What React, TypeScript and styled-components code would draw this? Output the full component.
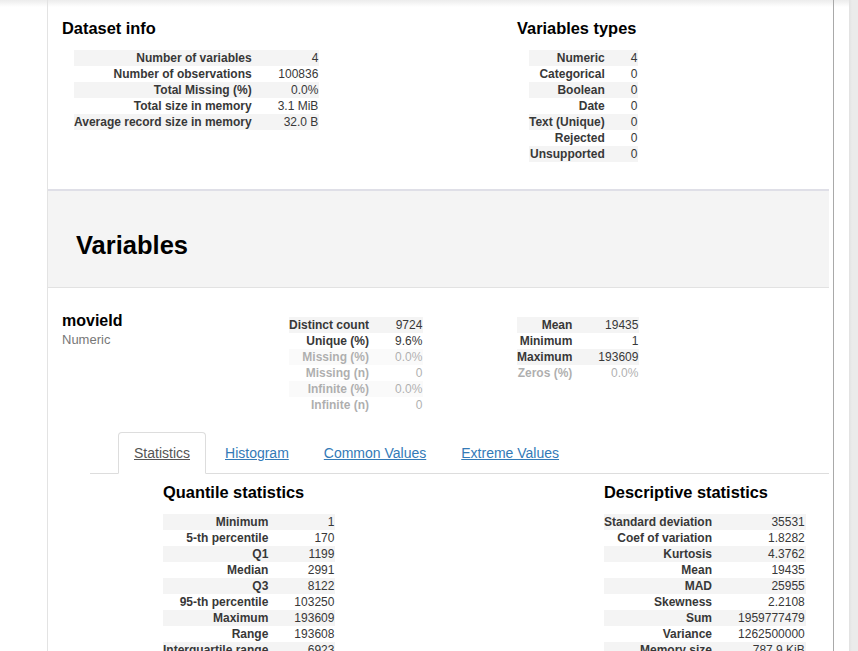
import styled, { createGlobalStyle } from 'styled-components';

const GlobalStyle = createGlobalStyle`
  html, body {
    margin: 0;
    padding: 0;
    overflow: hidden;
    background: #fff;
  }
  body {
    font-family: "Liberation Sans", Arial, Helvetica, sans-serif;
    color: #333;
  }
`;

const Viewport = styled.div`
  display: flex;
  height: 651px;
  overflow: hidden;
  background: linear-gradient(#ececec, #fff 7px);
`;

const PageArea = styled.div`
  flex: 1;
  padding: 0 15px 0 47px;
`;

const ScrollStrip = styled.div`
  width: 9px;
  background: linear-gradient(to right, #e1e1e1, #ebebeb 3px);
`;

const Container = styled.div`
  height: 100%;
  border-left: 1px solid #e3e3e3;
  border-right: 1px solid #a9a9a9;
`;

const Overview = styled.div`
  display: grid;
  grid-template-columns: 455px 1fr;
  padding: 18px 0 27px 14px;
`;

const SectionTitle = styled.h2`
  margin: 0 0 12px;
  font-size: 16.4px;
  line-height: 20px;
  font-weight: bold;
  color: #000;
`;

const StatsTable = styled.table<{ $indent?: number }>`
  border-collapse: collapse;
  border-spacing: 0;
  margin-left: ${(p) => p.$indent ?? 0}px;
  font-size: 12px;
  line-height: 16px;
`;

const StatRow = styled.tr<{ $ignore?: boolean }>`
  opacity: ${(p) => (p.$ignore ? 0.4 : 1)};
  &:nth-child(odd) {
    background: #f4f4f4;
  }
`;

const StatLabel = styled.th`
  text-align: right;
  font-weight: bold;
  color: #383838;
  padding: 0 8px 0 0;
  white-space: nowrap;
`;

const StatValue = styled.td`
  text-align: right;
  color: #383838;
  padding: 0 1px 0 18px;
  white-space: nowrap;
`;

const Band = styled.div`
  margin-right: 4px;
  background: #f4f4f4;
  border-top: 2px solid #dfdfe7;
  border-bottom: 1px solid #e2e2e2;
  padding: 39px 0 27px 28px;
`;

const BandTitle = styled.h1`
  margin: 0;
  font-size: 25.5px;
  line-height: 30px;
  font-weight: bold;
  color: #000;
`;

const VarRow = styled.div`
  display: grid;
  grid-template-columns: 227px 228px 1fr;
  padding: 23px 0 0 14px;
`;

const VarName = styled.div`
  font-size: 16px;
  line-height: 20px;
  font-weight: bold;
  color: #000;
`;

const VarType = styled.div`
  font-size: 13px;
  line-height: 18px;
  color: #777;
`;

const VarStats = styled.div`
  padding-top: 6px;
`;

const TabBar = styled.ul`
  list-style: none;
  display: flex;
  margin: 19px 4px 0 42px;
  padding: 0 0 0 28px;
  border-bottom: 1px solid #ddd;
`;

const Tab = styled.li`
  margin-bottom: -1px;
  margin-right: 3px;
`;

const TabLink = styled.a<{ $active?: boolean }>`
  display: block;
  padding: 10px 15px;
  font-size: 14px;
  line-height: 20px;
  text-decoration: underline;
  border: 1px solid transparent;
  border-radius: 4px 4px 0 0;
  color: ${(p) => (p.$active ? '#555' : '#337ab7')};
  background: ${(p) => (p.$active ? '#fff' : 'transparent')};
  border-color: ${(p) => (p.$active ? '#ddd #ddd transparent' : 'transparent')};
  cursor: pointer;
`;

const TabContent = styled.div`
  display: grid;
  grid-template-columns: 441px 1fr;
  padding: 8px 0 0 115px;
`;

type Row = [string, string, boolean?];

const datasetInfo: Row[] = [
  ['Number of variables', '4'],
  ['Number of observations', '100836'],
  ['Total Missing (%)', '0.0%'],
  ['Total size in memory', '3.1 MiB'],
  ['Average record size in memory', '32.0 B'],
];

const variableTypes: Row[] = [
  ['Numeric', '4'],
  ['Categorical', '0'],
  ['Boolean', '0'],
  ['Date', '0'],
  ['Text (Unique)', '0'],
  ['Rejected', '0'],
  ['Unsupported', '0'],
];

const countStats: Row[] = [
  ['Distinct count', '9724'],
  ['Unique (%)', '9.6%'],
  ['Missing (%)', '0.0%', true],
  ['Missing (n)', '0', true],
  ['Infinite (%)', '0.0%', true],
  ['Infinite (n)', '0', true],
];

const rangeStats: Row[] = [
  ['Mean', '19435'],
  ['Minimum', '1'],
  ['Maximum', '193609'],
  ['Zeros (%)', '0.0%', true],
];

const quantiles: Row[] = [
  ['Minimum', '1'],
  ['5-th percentile', '170'],
  ['Q1', '1199'],
  ['Median', '2991'],
  ['Q3', '8122'],
  ['95-th percentile', '103250'],
  ['Maximum', '193609'],
  ['Range', '193608'],
  ['Interquartile range', '6923'],
];

const descriptive: Row[] = [
  ['Standard deviation', '35531'],
  ['Coef of variation', '1.8282'],
  ['Kurtosis', '4.3762'],
  ['Mean', '19435'],
  ['MAD', '25955'],
  ['Skewness', '2.2108'],
  ['Sum', '1959777479'],
  ['Variance', '1262500000'],
  ['Memory size', '787.9 KiB'],
];

function Stats({ rows, indent }: { rows: Row[]; indent?: number }) {
  return (
    <StatsTable $indent={indent}>
      <tbody>
        {rows.map(([label, value, ignore]) => (
          <StatRow key={label} $ignore={ignore}>
            <StatLabel>{label}</StatLabel>
            <StatValue>{value}</StatValue>
          </StatRow>
        ))}
      </tbody>
    </StatsTable>
  );
}

const tabs = ['Statistics', 'Histogram', 'Common Values', 'Extreme Values'];

export default function App() {
  return (
    <>
      <GlobalStyle />
      <Viewport>
        <PageArea>
          <Container>
            <Overview>
              <div>
                <SectionTitle>Dataset info</SectionTitle>
                <Stats rows={datasetInfo} indent={12} />
              </div>
              <div>
                <SectionTitle>Variables types</SectionTitle>
                <Stats rows={variableTypes} indent={12} />
              </div>
            </Overview>

            <Band>
              <BandTitle>Variables</BandTitle>
            </Band>

            <VarRow>
              <div>
                <VarName>movieId</VarName>
                <VarType>Numeric</VarType>
              </div>
              <VarStats>
                <Stats rows={countStats} />
              </VarStats>
              <VarStats>
                <Stats rows={rangeStats} />
              </VarStats>
            </VarRow>

            <TabBar>
              {tabs.map((t, i) => (
                <Tab key={t}>
                  <TabLink $active={i === 0}>{t}</TabLink>
                </Tab>
              ))}
            </TabBar>

            <TabContent>
              <div>
                <SectionTitle>Quantile statistics</SectionTitle>
                <Stats rows={quantiles} />
              </div>
              <div>
                <SectionTitle>Descriptive statistics</SectionTitle>
                <Stats rows={descriptive} />
              </div>
            </TabContent>
          </Container>
        </PageArea>
        <ScrollStrip />
      </Viewport>
    </>
  );
}
